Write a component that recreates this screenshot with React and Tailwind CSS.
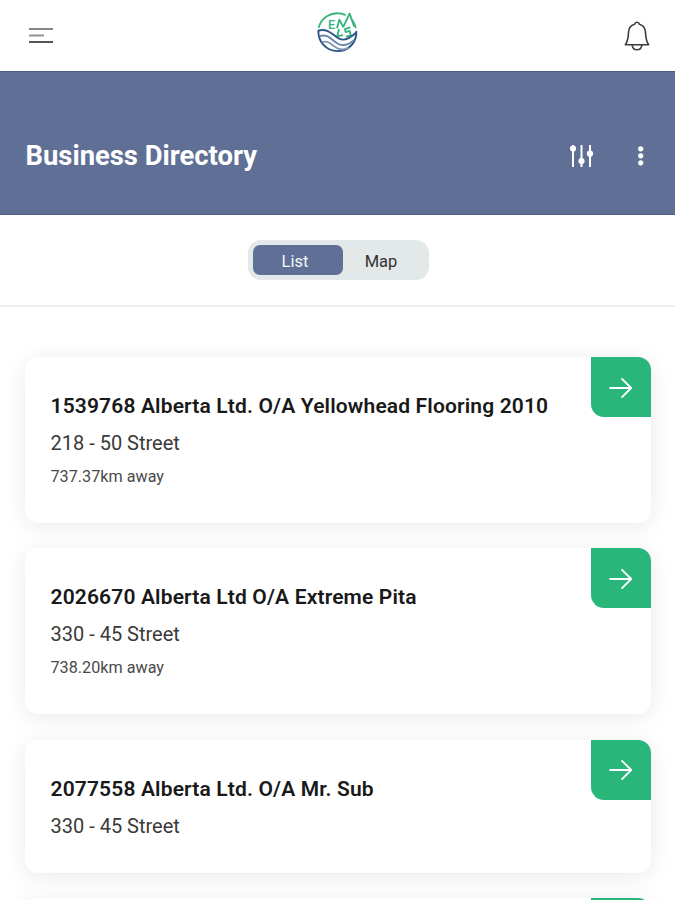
import React, { useState } from "react";

const businesses = [
  {
    id: 1,
    name: "1539768 Alberta Ltd. O/A Yellowhead Flooring 2010",
    address: "218 - 50 Street",
    distance: "737.37km away",
  },
  {
    id: 2,
    name: "2026670 Alberta Ltd O/A Extreme Pita",
    address: "330 - 45 Street",
    distance: "738.20km away",
  },
  {
    id: 3,
    name: "2077558 Alberta Ltd. O/A Mr. Sub",
    address: "330 - 45 Street",
  },
  { id: 4, name: "", address: "" },
];

const MenuIcon = () => (
  <svg width="24" height="18" viewBox="0 0 24 18" fill="none" strokeWidth="2">
    <path d="M0 2H24" stroke="#858585" />
    <path d="M0 8.5H15" stroke="#929292" />
    <path d="M0 15H24" stroke="#555555" />
  </svg>
);

const Logo = () => (
  <svg width="43" height="43" viewBox="0 0 42 42" fill="none">
    {/* mountains */}
    <g stroke="#35b57c" strokeWidth="1.8" strokeLinejoin="round">
      <path d="M2.6 16.5C5 7 14 0.5 25 2.6L29 4" />
      <path d="M35.2 8.5C37 11 38.3 13.5 38.8 16.8" />
      <path d="M20.5 16.8L22.8 8.5L26.7 15.5L32.8 2.6L37.3 15" />
      <path d="M22.5 17.5L20.8 24.5L26.5 23.6" />
      <path d="M33.5 16L28.2 17.8L29 20.6L32.9 19.5L34 23.7L29.3 25" />
    </g>
    <text
      x="11.6"
      y="17.4"
      fill="#35b57c"
      className="font-['Roboto'] text-[12.5px] font-medium"
    >
      E
    </text>
    {/* river */}
    <g stroke="#2d568b" strokeWidth="1.9">
      <path d="M2.3 19C13 16.5 17 24.5 23 27.3C29 30 35 25 39.4 21" />
      <path d="M2.3 18.5C1.8 30 10 39.2 21 39.2C32 39.2 40 30.5 39.4 19.5" />
      <path d="M3.5 24.5C12 21.5 16 29.5 22 32.3C27.5 34.7 33 32 37 28.5" stroke="#6f88aa" />
      <path d="M6 30.5C12 28 16 34 21 36.5C25 38.2 29 37.5 32 35.5" stroke="#8398b5" />
    </g>
  </svg>
);

const BellIcon = () => (
  <svg
    width="26"
    height="32"
    viewBox="0 0 26 32"
    fill="none"
    stroke="#3c3c3c"
    strokeWidth="1.6"
    strokeLinejoin="round"
  >
    <path d="M13 2.2C11.5 2.2 10.8 3.2 10.6 4.2C6.5 5.3 4.7 8.6 4.5 12.5C4.3 17.5 4.1 20.8 1.4 24.8H24.6C21.9 20.8 21.7 17.5 21.5 12.5C21.3 8.6 19.5 5.3 15.4 4.2C15.2 3.2 14.5 2.2 13 2.2Z" />
    <path d="M8.2 25C8.4 28 10.3 29.8 13 29.8C15.7 29.8 17.6 28 17.8 25" />
  </svg>
);

const FilterIcon = () => (
  <svg
    width="24"
    height="24"
    viewBox="0 0 24 24"
    fill="#ffffff"
    stroke="#ffffff"
    strokeWidth="2"
  >
    <path d="M3 1V23M11.5 1V23M20 1V23" />
    <circle cx="3" cy="4.5" r="2.1" />
    <circle cx="11.5" cy="17" r="2.1" />
    <circle cx="20" cy="9.7" r="2.1" />
  </svg>
);

const DotsIcon = () => (
  <svg width="8" height="20" viewBox="0 0 8 20" fill="#ffffff">
    <circle cx="3.7" cy="2.8" r="2.6" />
    <circle cx="3.7" cy="9.8" r="2.6" />
    <circle cx="3.7" cy="16.8" r="2.6" />
  </svg>
);

const ArrowIcon = () => (
  <svg
    width="24"
    height="22"
    viewBox="0 0 24 22"
    fill="none"
    stroke="#ffffff"
    strokeWidth="1.8"
    strokeLinejoin="round"
  >
    <path d="M0.5 11H22M12.5 1.3L22.2 11L12.5 20.7" />
  </svg>
);

const BusinessCard = ({ business }) => (
  <div className="flex justify-between rounded-[13px] bg-white shadow-[0_3px_22px_rgba(0,0,0,0.09)]">
    <div className="pt-[35px] pb-[33.5px] pl-[25.5px] whitespace-nowrap">
      <h2 className="text-[21px] leading-[28px] font-semibold tracking-[0.15px] text-[#191919]">
        {business.name}
      </h2>
      <p className="mt-[9px] text-[20px] leading-[28px] text-[#3a3a3a]">
        {business.address}
      </p>
      {business.distance && (
        <p className="mt-[7px] mb-[0.5px] text-[16.2px] leading-[25px] text-[#4a4a4a]">
          {business.distance}
        </p>
      )}
    </div>
    <button className="flex h-[60px] w-[60px] shrink-0 items-center justify-center rounded-tr-[13px] rounded-bl-[13px] bg-[#28b67a] pt-px">
      <ArrowIcon />
    </button>
  </div>
);

const App = () => {
  const [view, setView] = useState("list");
  const active = "bg-[#5f6f96] text-[#f4f6fb]";
  const inactive = "text-[#333333]";

  return (
    <div className="h-screen overflow-hidden bg-white font-['Roboto',sans-serif]">
      <header className="grid h-[71px] grid-cols-[1fr_auto_1fr] items-center pr-[25px] pl-[25px]">
        <button className="ml-[4px] justify-self-start">
          <MenuIcon />
        </button>
        <div className="-mt-[7px]">
          <Logo />
        </div>
        <button className="justify-self-end">
          <BellIcon />
        </button>
      </header>

      <div className="flex h-[144px] items-center justify-between border-y border-[#4c5c84] bg-[#5f6f96] pt-[25px] pr-[30.5px] pl-[25.5px]">
        <h1 className="pt-[2px] text-[27.4px] font-bold text-white">
          Business Directory
        </h1>
        <div className="flex items-center gap-[43px]">
          <FilterIcon />
          <DotsIcon />
        </div>
      </div>

      <div className="flex h-[92px] items-center justify-center border-b-2 border-[#eceeef] pl-[2px]">
        <div className="flex h-[40px] w-[181px] rounded-[13px] bg-[#e3e8e9] p-[5px] text-[16.5px]">
          <button
            className={`w-[90px] rounded-[7px] pt-[4px] pr-[6px] ${view === "list" ? active : inactive}`}
            onClick={() => setView("list")}
          >
            List
          </button>
          <button
            className={`w-[76px] rounded-[7px] pt-[4px] ${view === "map" ? active : inactive}`}
            onClick={() => setView("map")}
          >
            Map
          </button>
        </div>
      </div>

      <main className="flex flex-col gap-[25.25px] pt-[50px] pr-[24px] pl-[25px]">
        {businesses.map((business) => (
          <BusinessCard key={business.id} business={business} />
        ))}
      </main>
    </div>
  );
};

export default App;
